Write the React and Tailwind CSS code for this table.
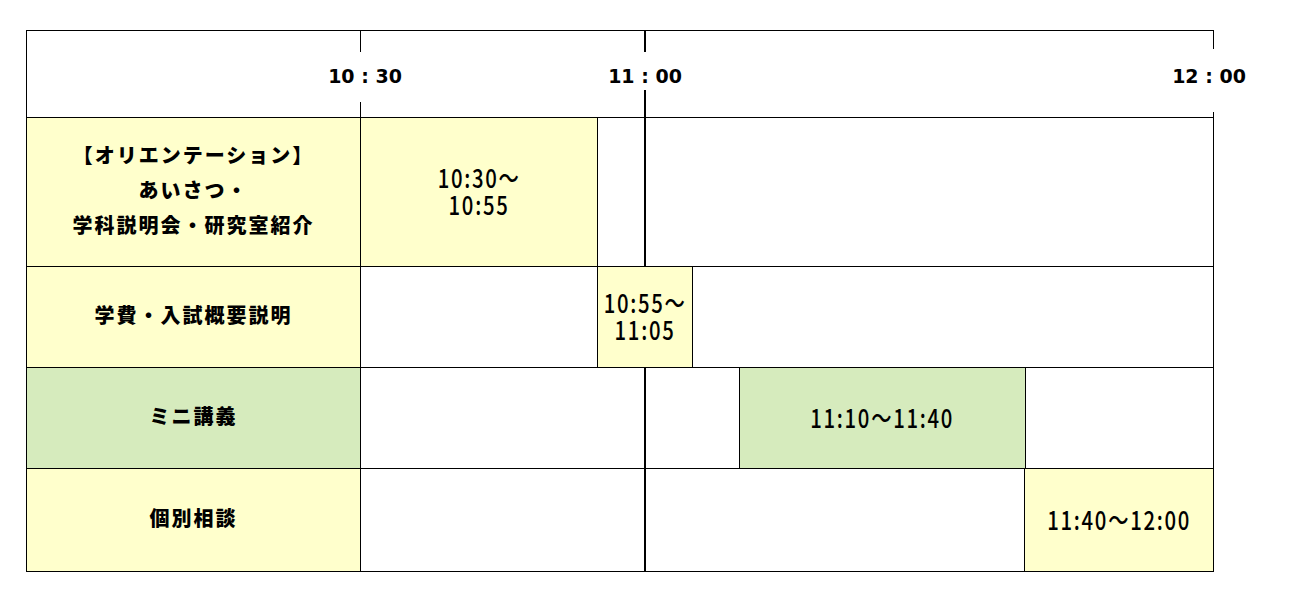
import React from 'react';

/* ── Schedule rows ── */
const YELLOW = 'bg-[#ffffcc]';
const GREEN = 'bg-[#d6ebbd]';

function Label({ children, bg }) {
  return (
    <div
      className={`${bg} w-[335px] shrink-0 border-l border-r border-black pb-[6px] flex flex-col items-center justify-center font-['Noto_Sans_CJK_JP',sans-serif] font-black text-[20px] tracking-[2px] leading-[35px] text-black`}
    >
      {children}
    </div>
  );
}

function Slot({ className = '', children }) {
  return (
    <div
      className={`${className} pb-[4px] flex flex-col items-center justify-center font-['Noto_Sans_CJK_JP',sans-serif] font-medium text-[26px] leading-[27px] text-black`}
    >
      {children}
    </div>
  );
}

// condensed time text, like the narrow face of the original sheet
function Narrow({ children }) {
  return (
    <span className="inline-block scale-x-[0.78] tracking-[2.2px] whitespace-nowrap">
      {children}
    </span>
  );
}

function Tick({ left, top, height, thick }) {
  return (
    <div
      className={`absolute bg-black ${thick ? 'w-[2px]' : 'w-px'}`}
      style={{ left, top, height }}
    />
  );
}

function TimeLabel({ center, children }) {
  return (
    <div
      className="absolute top-[31px] -translate-x-1/2 whitespace-pre font-['DejaVu_Sans',sans-serif] font-bold text-[19px] text-black"
      style={{ left: center }}
    >
      {children}
    </div>
  );
}

export default function App() {
  return (
    <div className="w-[1290px] h-[605px] bg-white pt-[30px] pl-[26px]">
      <div className="w-[1188px] flex flex-col">
        {/* Header with time axis */}
        <div className="relative h-[88px] border-t border-b border-l border-black">
          <Tick left={333} top={0} height={21} />
          <Tick left={333} top={71} height={16} />
          <Tick left={617} top={0} height={21} thick />
          <Tick left={617} top={59} height={28} thick />
          <Tick left={1186} top={0} height={18} />
          <Tick left={1186} top={81} height={6} />
          <TimeLabel center={338}>10 : 30</TimeLabel>
          <TimeLabel center={618}>11 : 00</TimeLabel>
          <TimeLabel center={1182}>12 : 00</TimeLabel>
        </div>

        {/* オリエンテーション */}
        <div className="flex h-[149px] border-b border-black">
          <Label bg={YELLOW}>
            <span>【オリエンテーション】</span>
            <span>あいさつ・</span>
            <span>学科説明会・研究室紹介</span>
          </Label>
          <Slot className={`${YELLOW} w-[237px] border-r border-black`}>
            <Narrow>10:30～</Narrow>
            <Narrow>10:55</Narrow>
          </Slot>
          <div className="w-[48px] border-r-2 border-black" />
          <div className="flex-1 border-r border-black" />
        </div>

        {/* 学費・入試概要説明 */}
        <div className="flex h-[101px] border-b border-black">
          <Label bg={YELLOW}>学費・入試概要説明</Label>
          <div className="w-[237px] border-r border-black" />
          <Slot className={`${YELLOW} w-[95px] border-r border-black`}>
            <Narrow>10:55～</Narrow>
            <Narrow>11:05</Narrow>
          </Slot>
          <div className="flex-1 border-r border-black" />
        </div>

        {/* ミニ講義 */}
        <div className="flex h-[101px] border-b border-black">
          <Label bg={GREEN}>ミニ講義</Label>
          <div className="w-[285px] border-r-2 border-black" />
          <div className="w-[94px] border-r border-black" />
          <Slot className={`${GREEN} w-[286px] border-r border-black`}>
            <Narrow>11:10～11:40</Narrow>
          </Slot>
          <div className="flex-1 border-r border-black" />
        </div>

        {/* 個別相談 */}
        <div className="flex h-[103px] border-b border-black">
          <Label bg={YELLOW}>個別相談</Label>
          <div className="w-[285px] border-r-2 border-black" />
          <div className="w-[379px] border-r border-black" />
          <Slot className={`${YELLOW} flex-1 border-r border-black`}>
            <Narrow>11:40～12:00</Narrow>
          </Slot>
        </div>
      </div>
    </div>
  );
}
